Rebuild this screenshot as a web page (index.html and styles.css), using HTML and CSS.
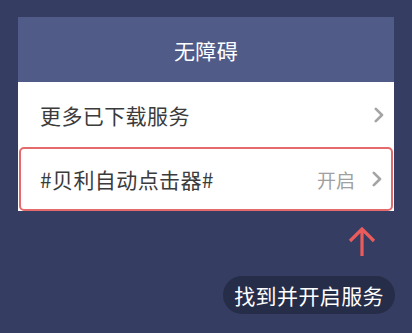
FILE: index.html
```html
<!DOCTYPE html>
<html lang="zh">
<head>
<meta charset="utf-8">
<link rel="stylesheet" href="styles.css">
</head>
<body>
<div class="page">
  <div class="card">
    <div class="header">无障碍</div>
    <div class="row">
      <span class="label">更多已下载服务</span>
      <span class="right">
        <svg class="chev" width="10" height="16" viewBox="0 0 10 16"><path d="M1.8 1.8 L8 8 L1.8 14.2" fill="none" stroke="#a4a4a4" stroke-width="2.6" stroke-linecap="round" stroke-linejoin="round"/></svg>
      </span>
    </div>
    <div class="row highlight">
      <span class="label">#贝利自动点击器#</span>
      <span class="right">
        <span class="status">开启</span>
        <svg class="chev" width="10" height="16" viewBox="0 0 10 16"><path d="M1.8 1.8 L8 8 L1.8 14.2" fill="none" stroke="#a4a4a4" stroke-width="2.6" stroke-linecap="round" stroke-linejoin="round"/></svg>
      </span>
    </div>
  </div>
  <div class="hint">
    <svg class="arrow" width="30" height="30" viewBox="0 0 30 30"><path d="M15 2 L15 29 M3 14 L15 2 L27 14" fill="none" stroke="#ea5c5c" stroke-width="3.2" stroke-linejoin="miter"/></svg>
    <div class="pill">找到并开启服务</div>
  </div>
</div>
</body>
</html>
```

FILE: styles.css
```css
html, body {
  margin: 0;
  padding: 0;
}
body {
  background: #353e62;
  font-family: "Noto Sans CJK SC", "Noto Sans", sans-serif;
  width: 412px;
  height: 333px;
  overflow: hidden;
}
.page {
  padding: 17px 18px 0 18px;
}
.card {
  background: #ffffff;
  width: 376px;
}
.header {
  height: 65px;
  background: #505b88;
  color: #ffffff;
  font-size: 21px;
  letter-spacing: 0.4px;
  display: flex;
  align-items: center;
  justify-content: center;
}
.row {
  height: 65px;
  display: flex;
  align-items: center;
  justify-content: space-between;
  padding: 0 10px 0 22px;
  box-sizing: border-box;
}
.label {
  font-size: 21px;
  color: #3b3b3b;
  letter-spacing: 0.4px;
}
.right {
  display: flex;
  align-items: center;
  gap: 17px;
}
.status {
  font-size: 19px;
  color: #a0a0a0;
}
.chev {
  display: block;
}
.highlight {
  height: 64px;
  margin: 0 1px;
  border: 2px solid #e46a6c;
  border-radius: 5px;
  padding: 0 9px 0 19px;
}
.hint {
  display: flex;
  flex-direction: column;
  align-items: flex-end;
}
.arrow {
  display: block;
  margin-top: 16px;
  margin-right: 17px;
}
.pill {
  margin-top: 19px;
  height: 38px;
  padding: 0 11px 0 11px;
  border-radius: 19px;
  background: #262d49;
  color: #ffffff;
  font-size: 21px;
  letter-spacing: 0.4px;
  display: flex;
  align-items: center;
  margin-right: -1px;
}
```
